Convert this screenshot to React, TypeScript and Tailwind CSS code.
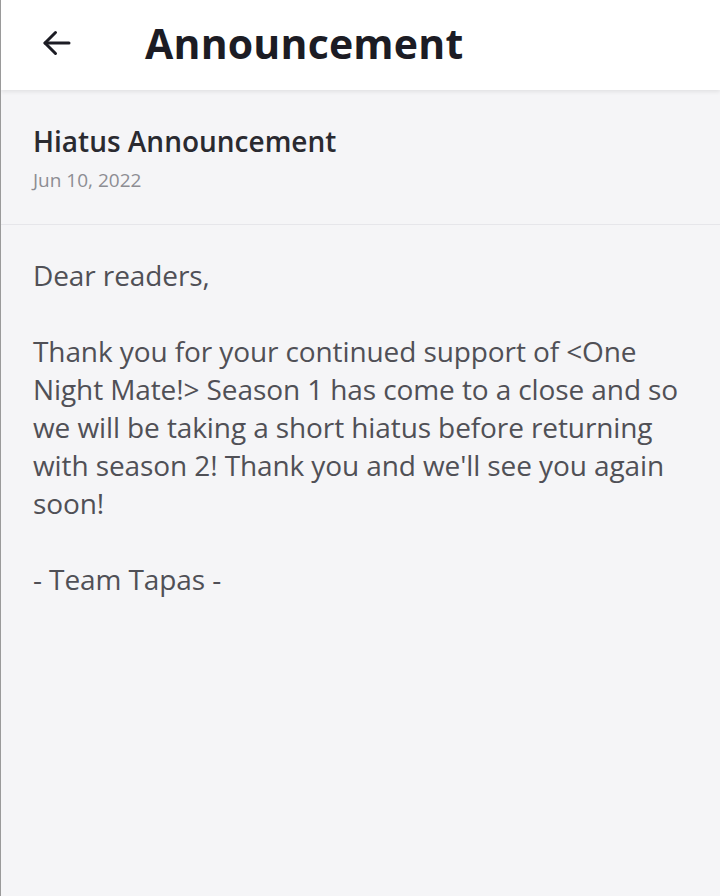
import React from 'react';

const body = `Dear readers,

Thank you for your continued support of <One Night Mate!> Season 1 has come to a close and so we will be taking a short hiatus before returning with season 2! Thank you and we'll see you again soon!

- Team Tapas -`;

export default function App() {
  return (
    <div className="w-[720px] h-[896px] bg-[#f5f5f7] border-l border-[#9a9a9a] overflow-hidden" style={{ fontFamily: '"Open Sans", "Noto Sans", sans-serif' }}>
      <header className="relative z-10 h-[90px] pb-[4px] bg-white flex items-center shadow-[0_2px_4px_rgba(0,0,0,0.08)]">
        <button className="w-[112px] pl-[38px] flex items-center text-[#1c1c24]">
          <svg width="36" height="36" viewBox="0 0 24 24" fill="none" stroke="currentColor" strokeWidth="2" strokeLinecap="round" strokeLinejoin="round">
            <path d="M20 12H4" />
            <path d="M11 5l-7 7 7 7" />
          </svg>
        </button>
        <h1 className="text-[41px] font-bold text-[#1c1c24] leading-[50px] ml-[32px] tracking-[0.2px]">Announcement</h1>
      </header>

      <section className="pl-[32px] pr-[30px] pt-[34px] pb-[31px] border-b border-[#e6e6ea]">
        <h2 className="text-[28px] font-semibold text-[#2a2a30] leading-[34px]">Hiatus Announcement</h2>
        <p className="text-[19px] text-[#8d8d93] leading-[26px] mt-[9px]">Jun 10, 2022</p>
      </section>

      <article className="pl-[32px] pt-[31px] pr-[24px] text-[28px] leading-[38px] tracking-[-0.1px] text-[#505056] whitespace-pre-line">
        {body}
      </article>
    </div>
  );
}
